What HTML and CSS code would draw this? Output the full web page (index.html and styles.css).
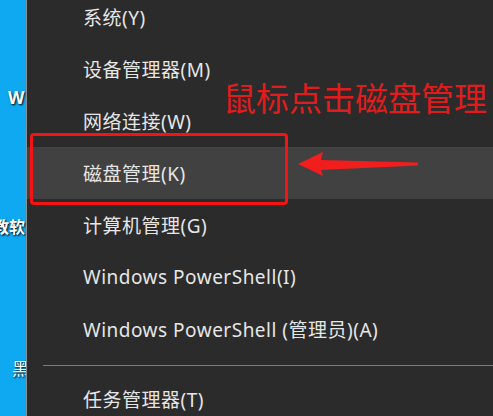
FILE: index.html
```html
<!DOCTYPE html>
<html lang="zh-CN">
<head>
<meta charset="utf-8">
<title>Win+X 菜单</title>
<link rel="stylesheet" href="styles.css">
</head>
<body>
<div class="screen">
  <div class="desktop">
    <span class="dlabel dl-w">W</span>
    <span class="dlabel dl-jc">教软</span>
    <span class="dlabel dl-h">黑</span>
  </div>
  <div class="menu">
    <ul class="items">
      <li class="item">系统(Y)</li>
      <li class="item">设备管理器(M)</li>
      <li class="item">网络连接(W)</li>
      <li class="item active">磁盘管理(K)</li>
      <li class="item">计算机管理(G)</li>
      <li class="item">Windows PowerShell(I)</li>
      <li class="item">Windows PowerShell (管理员)(A)</li>
    </ul>
    <div class="sep"></div>
    <ul class="items">
      <li class="item">任务管理器(T)</li>
    </ul>
  </div>
  <div class="note">鼠标点击磁盘管理</div>
  <div class="mark"></div>
  <svg class="arrow" width="125" height="30" viewBox="0 0 125 30">
    <path d="M0 13 L25 1 L23 9 L120 11.5 L120 14.5 L23 19 L25 25 Z" fill="#f21d1d"/>
  </svg>
</div>
</body>
</html>
```
FILE: styles.css
```css
html, body {
  margin: 0;
  padding: 0;
  width: 493px;
  height: 416px;
  overflow: hidden;
  background: #2b2b2b;
}
.screen {
  position: relative;
  display: flex;
  width: 493px;
  height: 416px;
  overflow: hidden;
  font-family: "Noto Sans", "Noto Sans CJK SC", sans-serif;
}
.desktop {
  position: relative;
  width: 26px;
  flex: none;
  background: #0fa9f2;
  border-right: 1px solid #8a8f94;
  overflow: hidden;
}
.dlabel {
  position: absolute;
  color: #ffffff;
  font-family: "Noto Sans CJK SC", sans-serif;
  font-size: 17px;
  font-weight: 700;
  text-shadow: 1px 1px 2px #000;
  white-space: nowrap;
}
.dl-w { left: 8px; top: 86px; font-family: "Noto Sans", sans-serif; }
.dl-jc { left: -7px; top: 214px; font-size: 16px; }
.dl-h { left: 12px; top: 355px; font-weight: 400; }
.menu {
  flex: 1;
  background: #2b2b2b;
  color: #e6e6e6;
  font-size: 19px;
  letter-spacing: 0.5px;
}
.items {
  list-style: none;
  margin: 0;
  padding: 0;
}
.items:first-child {
  margin-top: -9px;
}
.item {
  height: 52px;
  display: flex;
  align-items: center;
  padding-left: 56px;
  white-space: nowrap;
}
.item.active {
  background: #414141;
}
.sep {
  height: 1px;
  background: #7c7c7c;
  margin: 10px 0 7px 16px;
}
.note {
  position: absolute;
  left: 223px;
  top: 75px;
  font-family: "Noto Sans CJK SC", sans-serif;
  font-size: 33px;
  line-height: 44px;
  color: #e01c1c;
  white-space: nowrap;
}
.mark {
  position: absolute;
  left: 30px;
  top: 133px;
  width: 252px;
  height: 66px;
  border: 3px solid #f41414;
  border-radius: 4px;
}
.arrow {
  position: absolute;
  left: 298px;
  top: 151px;
}
```
